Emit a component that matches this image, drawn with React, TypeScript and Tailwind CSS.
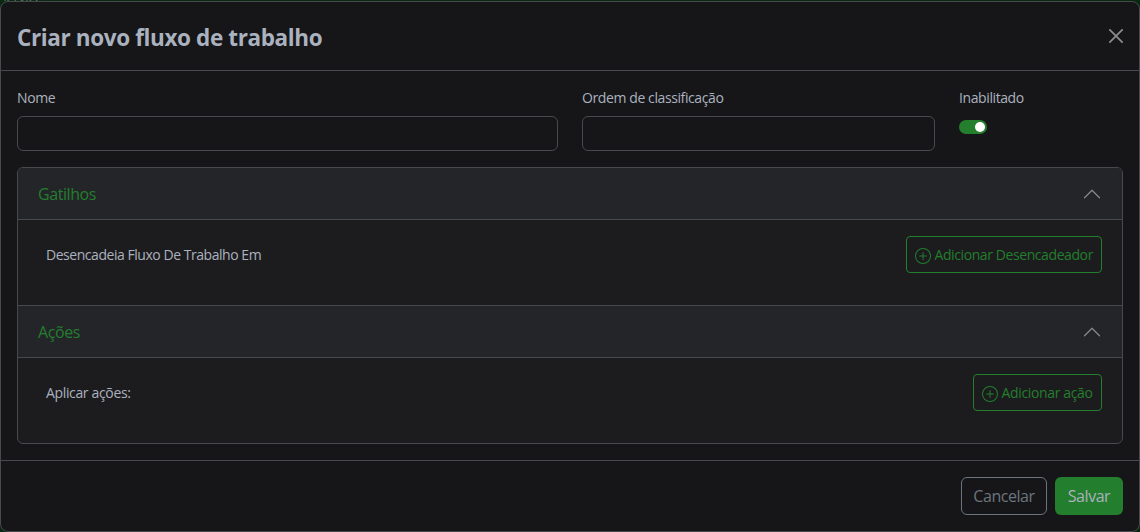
import type { ReactNode } from 'react';

function ChevronUp() {
  return (
    <svg className="size-5 rotate-180" viewBox="0 0 16 16" fill="#85868a">
      <path
        fillRule="evenodd"
        d="M1.646 4.646a.5.5 0 0 1 .708 0L8 10.293l5.646-5.647a.5.5 0 0 1 .708.708l-6 6a.5.5 0 0 1-.708 0l-6-6a.5.5 0 0 1 0-.708z"
      />
    </svg>
  );
}

function PlusCircle() {
  return (
    <svg className="size-4 shrink-0 translate-y-px" viewBox="0 0 16 16" fill="currentColor">
      <path d="M8 15A7 7 0 1 1 8 1a7 7 0 0 1 0 14zm0 1A8 8 0 1 0 8 0a8 8 0 0 0 0 16z" />
      <path d="M8 4a.5.5 0 0 1 .5.5v3h3a.5.5 0 0 1 0 1h-3v3a.5.5 0 0 1-1 0v-3h-3a.5.5 0 0 1 0-1h3v-3A.5.5 0 0 1 8 4z" />
    </svg>
  );
}

function Section({ title, children }: { title: string; children: ReactNode }) {
  return (
    <section className="border-b border-[#47494d] last:border-b-0">
      <button className="flex h-13 w-full items-center justify-between border-b border-[#47494d] bg-[#242529] pr-5 pl-5 text-[#237e2d]">
        <span className="text-base tracking-[-0.42px]">{title}</span>
        <ChevronUp />
      </button>
      <div className="flex h-[85px] items-start justify-between pt-4 pr-5 pl-7">{children}</div>
    </section>
  );
}

export default function App() {
  return (
    <div className="flex h-[532px] w-[1140px] flex-col overflow-hidden bg-[#092811] font-['Open_Sans','Noto_Sans',sans-serif] text-sm text-[#abb2bf]">
      <div className="flex h-px shrink-0 items-end overflow-hidden text-[13px] text-[#68736b]">
        <span className="leading-[7px]">service</span>
      </div>
      <div className="flex h-[531px] flex-col rounded-lg border border-[#47494d] bg-[#161618]">
        <header className="flex h-[69px] shrink-0 items-center justify-between border-b border-[#47494d] px-4">
          <h1 className="pt-1 text-[22.5px] leading-9 font-bold tracking-[-0.38px] whitespace-nowrap">
            Criar novo fluxo de trabalho
          </h1>
          <button aria-label="Fechar">
            <svg className="size-3.5" viewBox="0 0 16 16" fill="#8b8b8c">
              <path d="M.293.293a1 1 0 0 1 1.414 0L8 6.586 14.293.293a1 1 0 1 1 1.414 1.414L9.414 8l6.293 6.293a1 1 0 0 1-1.414 1.414L8 9.414l-6.293 6.293a1 1 0 0 1-1.414-1.414L6.586 8 .293 1.707a1 1 0 0 1 0-1.414z" />
            </svg>
          </button>
        </header>

        <main className="flex flex-1 flex-col px-4 pt-4">
          <div className="flex h-20 gap-6">
            <label className="flex w-[541px] flex-col">
              <span className="h-[29px] leading-[21px] tracking-[-0.4px]">Nome</span>
              <input className="h-[35px] rounded-md border border-[#47494d]" />
            </label>
            <label className="flex w-[353px] flex-col">
              <span className="h-[29px] leading-[21px] tracking-[-0.4px]">Ordem de classificação</span>
              <input className="h-[35px] rounded-md border border-[#47494d]" />
            </label>
            <div className="flex flex-col">
              <span className="h-[33px] leading-[21px] tracking-[-0.4px]">Inabilitado</span>
              <button
                role="switch"
                aria-checked="true"
                className="flex h-3.5 w-7 items-center justify-end rounded-full bg-[#237e2d] pr-0.5"
              >
                <span className="size-2.5 rounded-full bg-white" />
              </button>
            </div>
          </div>

          <div className="h-[277px] overflow-hidden rounded-md border border-[#47494d] bg-[#1c1c1e]">
            <Section title="Gatilhos">
              <span className="leading-[37px] tracking-[-0.46px]">Desencadeia Fluxo De Trabalho Em</span>
              <button className="flex h-[37px] w-[196px] items-center gap-[3.5px] rounded border border-[#237e2d] pl-2 whitespace-nowrap text-[#237e2d]">
                <PlusCircle />
                <span className="tracking-[-0.41px]">Adicionar Desencadeador</span>
              </button>
            </Section>
            <Section title="Ações">
              <span className="leading-[37px] tracking-[-0.35px]">Aplicar ações:</span>
              <button className="flex h-[37px] w-[129px] items-center gap-[3.5px] rounded border border-[#237e2d] pl-2 whitespace-nowrap text-[#237e2d]">
                <PlusCircle />
                <span className="tracking-[-0.35px]">Adicionar ação</span>
              </button>
            </Section>
          </div>
        </main>

        <footer className="flex h-[71px] shrink-0 items-start justify-end gap-2 border-t border-[#47494d] px-4 pt-4 text-base tracking-[-0.45px]">
          <button className="h-[38px] w-[86px] rounded-md border border-[#6c757d] text-[#6c757d]">
            Cancelar
          </button>
          <button className="h-[38px] w-[68px] rounded-md bg-[#237e2d]">Salvar</button>
        </footer>
      </div>
    </div>
  );
}
